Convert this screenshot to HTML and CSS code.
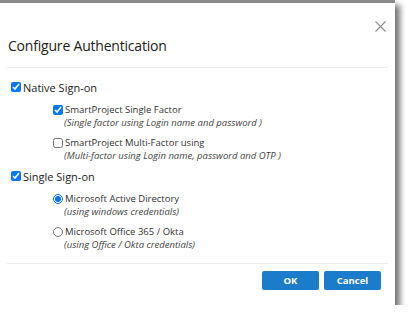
FILE: index.html
```html
<!DOCTYPE html>
<html lang="en">
<head>
    <meta charset="UTF-8">
    <title>Configure Authentication</title>
    <link rel="stylesheet" href="styles.css">
</head>
<body>
    <div class="dialog">
        <button class="close" aria-label="Close">
            <svg width="11" height="11" viewBox="0 0 11 11">
                <path d="M0.5 0.5 L10.5 10.5 M10.5 0.5 L0.5 10.5" stroke="#8c8c8c" stroke-width="1.1" fill="none"/>
            </svg>
        </button>
        <h1 class="title">Configure Authentication</h1>

        <div class="body">
            <label class="group">
                <input type="checkbox" checked>Native Sign-on
            </label>
            <div class="options">
                <div class="option">
                    <label class="opt-label"><input type="checkbox" checked>SmartProject Single Factor</label>
                    <div class="hint">(Single factor using Login name and password )</div>
                </div>
                <div class="option">
                    <label class="opt-label"><input type="checkbox"> SmartProject Multi-Factor using</label>
                    <div class="hint">(Multi-factor using Login name, password and OTP )</div>
                </div>
            </div>

            <label class="group">
                <input type="checkbox" checked> Single Sign-on
            </label>
            <div class="options">
                <div class="option">
                    <label class="opt-label"><input type="radio" name="sso" checked>Microsoft Active Directory</label>
                    <div class="hint">(using windows credentials)</div>
                </div>
                <div class="option">
                    <label class="opt-label"><input type="radio" name="sso">Microsoft Office 365 / Okta</label>
                    <div class="hint">(using Office / Okta credentials)</div>
                </div>
            </div>
        </div>

        <div class="footer">
            <button class="btn">OK</button>
            <button class="btn">Cancel</button>
        </div>
    </div>
</body>
</html>
```

FILE: styles.css
```css
body {
    margin: 0;
    background-color: #fff;
    font-family: "Open Sans", "Noto Sans", sans-serif;
    color: #333;
}

.dialog {
    position: relative;
    width: 395px;
    height: 302px;
    background-color: #fff;
    border-top: 3px solid #8a8a8a;
    box-shadow: 5px 5px 6px rgba(0, 0, 0, 0.55);
}

.close {
    position: absolute;
    top: 17px;
    right: 9px;
    background: none;
    border: none;
    padding: 0;
    cursor: pointer;
}

.title {
    margin: 0 7px;
    padding: 33px 0 12px 1px;
    font-size: 14px;
    font-weight: normal;
    color: #222;
    border-bottom: 1px solid #ececec;
    letter-spacing: -0.2px;
}

.body {
    padding: 11px 0 0 9px;
}

.group {
    display: flex;
    align-items: center;
    font-size: 11px;
    color: #222;
    height: 16px;
}

.group input {
    margin: 0 2px 0 2px;
    width: 10px;
    height: 10px;
}

.options {
    padding: 8px 0 6px 44px;
}

.option {
    margin-bottom: 7px;
}

.option:last-child {
    margin-bottom: 0;
}

.opt-label {
    display: flex;
    align-items: center;
    font-size: 9.5px;
    color: #333;
    height: 13px;
}

.opt-label input {
    margin: 0 2px 0 0;
    width: 10px;
    height: 10px;
}

.hint {
    font-style: italic;
    font-size: 9.5px;
    color: #444;
    margin-left: 11px;
    line-height: 13px;
}

.footer {
    position: absolute;
    left: 7px;
    right: 7px;
    bottom: 15px;
    border-top: 1px solid #ececec;
    padding-top: 7px;
    display: flex;
    justify-content: flex-end;
    gap: 5px;
    padding-right: 7px;
}

.btn {
    width: 57px;
    height: 19px;
    background-color: #1b7ccb;
    color: #fff;
    border: none;
    border-radius: 2px;
    font-family: "Open Sans", sans-serif;
    font-weight: bold;
    font-size: 9.5px;
    cursor: pointer;
}
```
